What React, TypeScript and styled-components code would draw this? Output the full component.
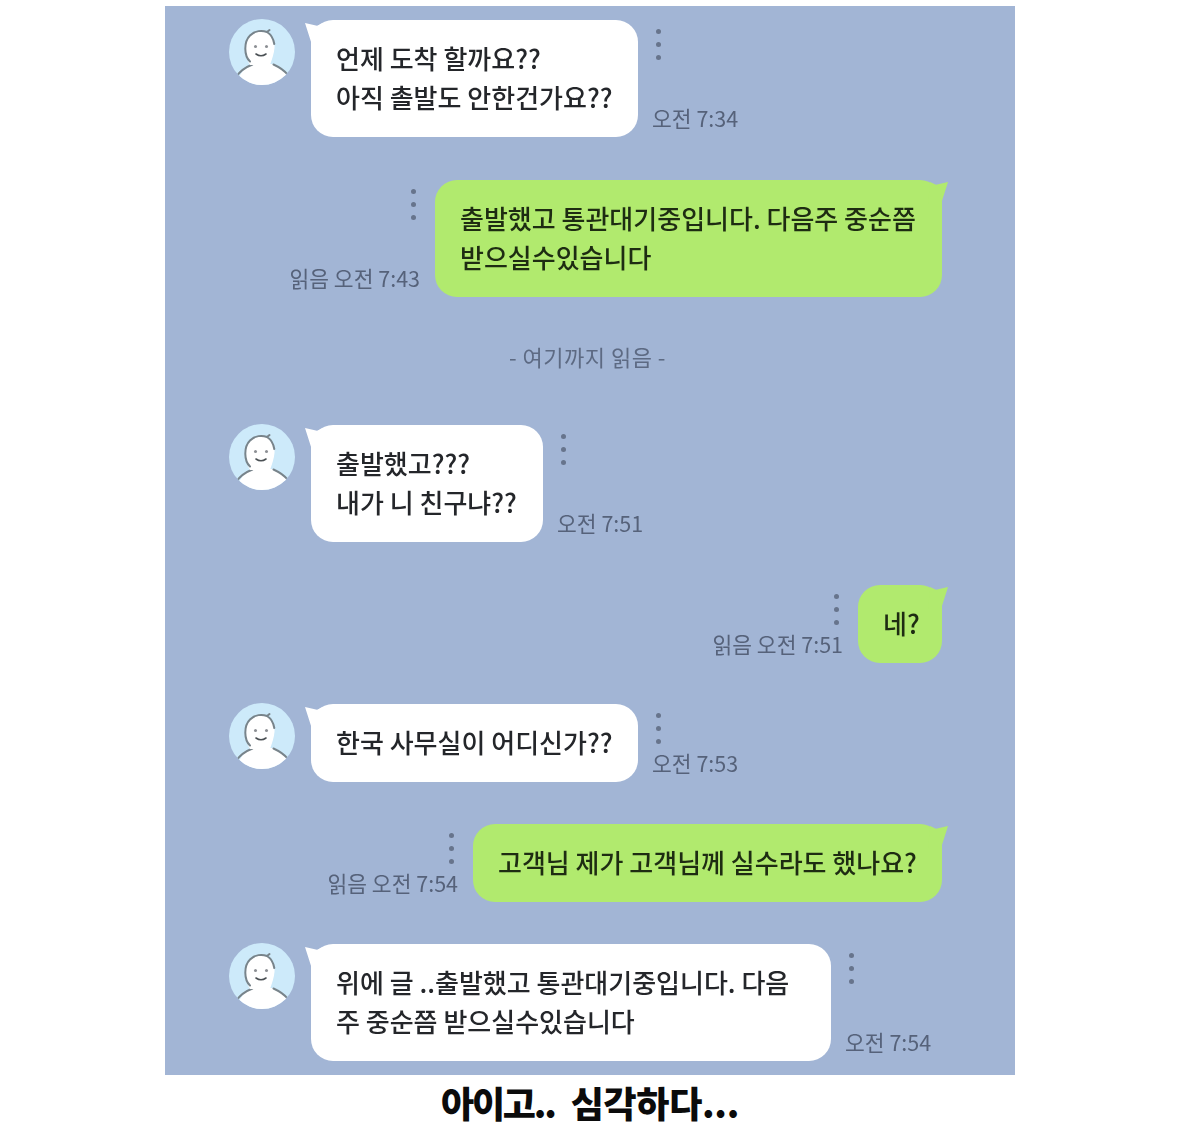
import * as React from 'react';
import styled, { createGlobalStyle } from 'styled-components';

const GlobalStyle = createGlobalStyle`
  html, body {
    margin: 0;
    padding: 0;
    background: #fff;
  }
`;

const Page = styled.div`
  width: 1179px;
  height: 1139px;
  padding: 6px 0 0 165px;
  box-sizing: border-box;
  font-family: 'Noto Sans CJK KR', 'Noto Sans', sans-serif;
  overflow: hidden;
`;

const Chat = styled.div`
  width: 850px;
  height: 1069px;
  padding-top: 14px;
  box-sizing: border-box;
  background: #a2b5d5;
  display: flex;
  flex-direction: column;
  filter: blur(0.4px);
`;

const Row = styled.div<{ $gap: number }>`
  display: flex;
  margin-bottom: ${p => p.$gap}px;
`;

const InRow = styled(Row)`
  padding-left: 64px;
`;

const OutRow = styled(Row)`
  justify-content: flex-end;
  padding-right: 73px;
`;

const AvatarWrap = styled.div`
  width: 66px;
  height: 66px;
  margin: -1px 16px 0 0;
  flex: none;
`;

const Bubble = styled.div<{ $w: number }>`
  position: relative;
  width: ${p => p.$w}px;
  box-sizing: border-box;
  padding: 18px 0 21px 25px;
  border-radius: 22px;
  font-size: 26px;
  line-height: 39px;
  font-weight: 500;
  letter-spacing: 0;
  white-space: pre;
  color: #24262a;
`;

const InBubble = styled(Bubble)`
  background: #fff;

  &::before {
    content: '';
    position: absolute;
    left: -6px;
    top: 3px;
    width: 20px;
    height: 22px;
    background: #fff;
    clip-path: polygon(0 0, 60% 12%, 90% 0, 100% 100%, 35% 100%);
  }
`;

const OutBubble = styled(Bubble)`
  background: #b1ea6e;
  color: #1e2c12;

  &::after {
    content: '';
    position: absolute;
    right: -6px;
    top: 2px;
    width: 20px;
    height: 22px;
    background: #b1ea6e;
    clip-path: polygon(100% 0, 40% 12%, 10% 0, 0 100%, 65% 100%);
  }
`;

const Meta = styled.div<{ $alignEnd?: boolean }>`
  display: flex;
  flex-direction: column;
  justify-content: space-between;
  align-items: ${p => (p.$alignEnd ? 'flex-end' : 'flex-start')};
  margin: ${p => (p.$alignEnd ? '0 15px 0 0' : '0 0 0 14px')};
`;

const Dots = styled.div<{ $side: 'left' | 'right' }>`
  display: flex;
  flex-direction: column;
  gap: 8px;
  margin-top: 9px;
  ${p => (p.$side === 'left' ? 'padding-left: 4px;' : 'padding-right: 4px;')}

  span {
    width: 5px;
    height: 5px;
    border-radius: 50%;
    background: #67748c;
  }
`;

const Time = styled.div`
  font-size: 21.5px;
  line-height: 26px;
  letter-spacing: 0;
  color: #56627a;
  white-space: nowrap;
  margin-bottom: 6px;
`;

const Divider = styled.div`
  text-align: center;
  font-size: 22px;
  line-height: 26px;
  letter-spacing: 0.5px;
  color: #5d6a83;
  margin: 46px 0 56px;
  padding-right: 5px;
`;

const Caption = styled.div`
  width: 850px;
  margin-top: 4px;
  text-align: center;
  font-size: 36px;
  line-height: 46px;
  font-weight: 900;
  color: #0b0b0b;
  white-space: pre;
  word-spacing: 10px;
`;

const CaptionWord = styled.span<{ $spacing: number }>`
  letter-spacing: ${p => p.$spacing}px;
`;

const Avatar = ({ id }: { id: string }) => (
  <AvatarWrap>
    <svg width="66" height="66" viewBox="0 0 66 66">
      <defs>
        <clipPath id={id}>
          <circle cx="33" cy="33" r="33" />
        </clipPath>
      </defs>
      <g clipPath={`url(#${id})`}>
        <rect width="66" height="66" fill="#cdeafa" />
        <path d="M7 68 C9 55 16 48 24 45 H45 C52 48 58 52 62 68 Z" fill="#fff" />
        <path
          d="M7 58 C11 52 17 48 23.5 45.5 M44.5 45.5 C50 48 55 51 59 56"
          fill="none"
          stroke="#78848b"
          strokeWidth="2"
          strokeLinecap="round"
        />
        <path d="M21 46 C15 37 14.5 23 21 16.5 C26 11.5 33 11 38 13 C43 15.5 46 22 45.5 29 C45 35 43 40 41 46 Z" fill="#fff" />
        <path
          d="M21 42.5 C15 37 14.5 23 21 16.5 C26 11.5 33 11 38 13 L40.5 11 M38 13 C42 15.5 44.5 20 45.3 25"
          fill="none"
          stroke="#78848b"
          strokeWidth="2"
          strokeLinecap="round"
        />
        <circle cx="26.5" cy="27.5" r="1.5" fill="#8c8f94" />
        <circle cx="37.5" cy="27.5" r="1.5" fill="#8c8f94" />
        <path d="M27 35 Q32 38.5 37 35" fill="none" stroke="#4a5054" strokeWidth="1.6" strokeLinecap="round" />
      </g>
    </svg>
  </AvatarWrap>
);

const DotStack = ({ side }: { side: 'left' | 'right' }) => (
  <Dots $side={side}>
    <span />
    <span />
    <span />
  </Dots>
);

type MessageProps = { w: number; gap: number; time: string; children: React.ReactNode };

const Incoming = ({ w, gap, time, children }: MessageProps) => {
  const id = React.useId();
  return (
    <InRow $gap={gap}>
      <Avatar id={id} />
      <InBubble $w={w}>{children}</InBubble>
      <Meta>
        <DotStack side="left" />
        <Time>{time}</Time>
      </Meta>
    </InRow>
  );
};

const Outgoing = ({ w, gap, time, children }: MessageProps) => (
  <OutRow $gap={gap}>
    <Meta $alignEnd>
      <DotStack side="right" />
      <Time>{time}</Time>
    </Meta>
    <OutBubble $w={w}>{children}</OutBubble>
  </OutRow>
);

export default function App() {
  return (
    <Page>
      <GlobalStyle />
      <Chat>
        <Incoming w={327} gap={43} time="오전 7:34">{'언제 도착 할까요??\n아직 촐발도 안한건가요??'}</Incoming>
        <Outgoing w={507} gap={0} time="읽음 오전 7:43">{'출발했고 통관대기중입니다. 다음주 중순쯤\n받으실수있습니다'}</Outgoing>
        <Divider>- 여기까지 읽음 -</Divider>
        <Incoming w={232} gap={43} time="오전 7:51">{'출발했고???\n내가 니 친구냐??'}</Incoming>
        <Outgoing w={84} gap={41} time="읽음 오전 7:51">네?</Outgoing>
        <Incoming w={327} gap={42} time="오전 7:53">한국 사무실이 어디신가??</Incoming>
        <Outgoing w={469} gap={42} time="읽음 오전 7:54">고객님 제가 고객님께 실수라도 했나요?</Outgoing>
        <Incoming w={520} gap={0} time="오전 7:54">{'위에 글 ..출발했고 통관대기중입니다. 다음\n주 중순쯤 받으실수있습니다'}</Incoming>
      </Chat>
      <Caption>
        <CaptionWord $spacing={-2.2}>아이고.. </CaptionWord>
        <CaptionWord $spacing={-0.3}>심각하다...</CaptionWord>
      </Caption>
    </Page>
  );
}
